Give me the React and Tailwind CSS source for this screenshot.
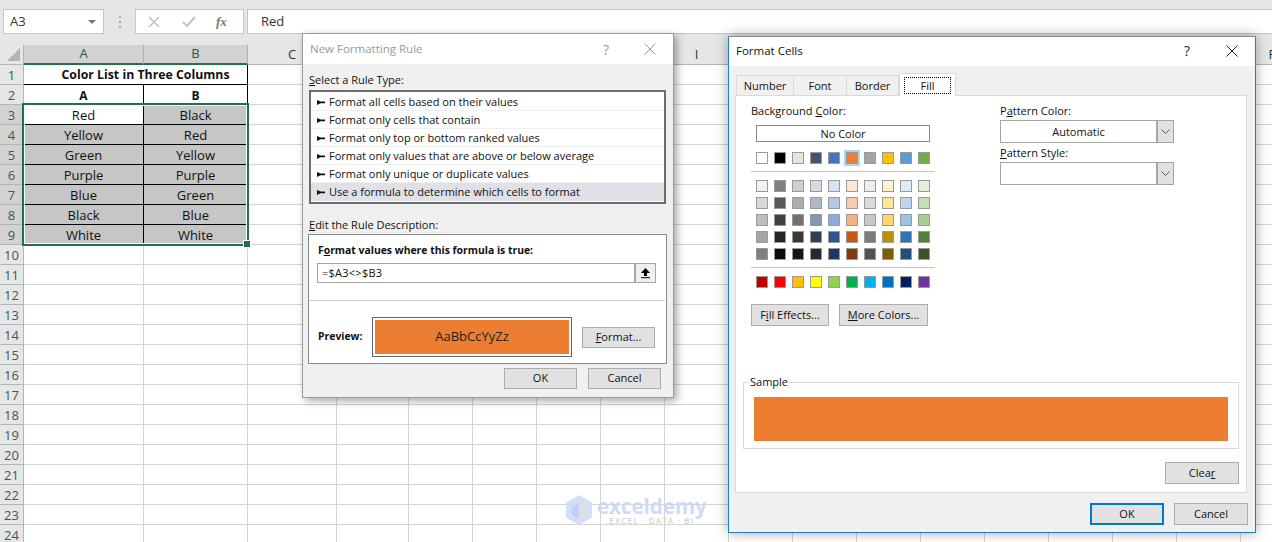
const headerCols = ['A', 'B', 'C', 'D', 'E', 'F', 'G', 'H', 'I', 'J', 'K', 'L', 'M', 'N', 'O', 'P', 'Q', 'R'];
const tableRows = [
  ['Red', 'Black'],
  ['Yellow', 'Red'],
  ['Green', 'Yellow'],
  ['Purple', 'Purple'],
  ['Blue', 'Green'],
  ['Black', 'Blue'],
  ['White', 'White'],
];

const themeColors = ['#ffffff', '#000000', '#e7e6e6', '#44546a', '#4472c4', '#ed7d31', '#a5a5a5', '#ffc000', '#5b9bd5', '#70ad47'];
const tintRows = [
  ['#f2f2f2', '#7f7f7f', '#d0cece', '#d6dce4', '#d9e2f3', '#fbe5d5', '#ededed', '#fff2cc', '#deeaf6', '#e2efd9'],
  ['#d8d8d8', '#595959', '#aeabab', '#adb9ca', '#b4c6e7', '#f7cbac', '#dbdbdb', '#ffe599', '#bdd6ee', '#c5e0b3'],
  ['#bfbfbf', '#3f3f3f', '#757070', '#8496b0', '#8eaadb', '#f4b183', '#c9c9c9', '#ffd966', '#9cc3e5', '#a8d08d'],
  ['#a5a5a5', '#262626', '#3a3838', '#323f4f', '#2f5496', '#c55a11', '#7b7b7b', '#bf9000', '#2e75b5', '#538135'],
  ['#7f7f7f', '#0c0c0c', '#171616', '#222a35', '#1f3864', '#833c0b', '#525252', '#7f6000', '#1e4e79', '#375623'],
];
const standardColors = ['#c00000', '#ff0000', '#ffc000', '#ffff00', '#92d050', '#00b050', '#00b0f0', '#0070c0', '#002060', '#7030a0'];

const ruleTypes = [
  'Format all cells based on their values',
  'Format only cells that contain',
  'Format only top or bottom ranked values',
  'Format only values that are above or below average',
  'Format only unique or duplicate values',
  'Use a formula to determine which cells to format',
];

function CloseIcon({ color }) {
  return (
    <svg width="12" height="12" viewBox="0 0 12 12" fill="none" stroke={color} strokeWidth="1">
      <path d="M0.5 0.5L11.5 11.5M11.5 0.5L0.5 11.5" />
    </svg>
  );
}

function ChevronIcon() {
  return (
    <svg width="9" height="5" viewBox="0 0 9 5" fill="none" stroke="#555" strokeWidth="1">
      <path d="M0.5 0.5L4.5 4.5L8.5 0.5" />
    </svg>
  );
}

function RuleArrow() {
  return (
    <svg width="8" height="5" viewBox="0 0 8 5" className="shrink-0" fill="#111">
      <path d="M0 0L3.5 1.6L8 1.6L8 3.2L3.5 3.2L0 5Z" />
    </svg>
  );
}

function DialogButton({ className = '', children }) {
  return (
    <div className={`flex items-center justify-center h-[22px] bg-[#e1e1e1] border border-[#adadad] text-[#111] ${className}`}>
      {children}
    </div>
  );
}

function Swatch({ color, selected }) {
  return (
    <div
      className={`w-3 h-3 border border-[#9a9a9a] ${selected ? 'ring-2 ring-[#a6d4f5]' : ''}`}
      style={{ backgroundColor: color }}
    />
  );
}

function SwatchRow({ colors, selected }) {
  return (
    <div className="flex gap-[6px]">
      {colors.map((c, i) => (
        <Swatch key={i} color={c} selected={selected === i} />
      ))}
    </div>
  );
}

function Combo({ value }) {
  return (
    <div className="flex w-[174px] h-[23px] mt-px bg-white border border-[#a5a5a5]">
      <div className="flex-1 flex items-center justify-center pt-px">{value}</div>
      <div className="flex items-center justify-center w-[17px] bg-[#e1e1e1] border-l-2 border-[#a5a5a5]">
        <ChevronIcon />
      </div>
    </div>
  );
}

function Toolbar() {
  return (
    <div className="flex items-start h-[45px] pt-[9px] pl-[3px] bg-[#e6e6e6]">
      <div className="flex items-center justify-between w-[101px] h-[25px] pl-[6px] pr-[7px] bg-white border border-[#c6c6c6] text-[13px] text-[#333]">
        <span>A3</span>
        <span className="w-0 h-0 border-x-[4px] border-x-transparent border-t-[4px] border-t-[#777]" />
      </div>
      <div className="flex flex-col gap-[3px] w-[31px] h-[25px] items-center justify-center">
        <span className="w-[2px] h-[2px] bg-[#a8a8a8]" />
        <span className="w-[2px] h-[2px] bg-[#a8a8a8]" />
        <span className="w-[2px] h-[2px] bg-[#a8a8a8]" />
      </div>
      <div className="flex items-center w-[109px] h-[25px] bg-white border border-[#c6c6c6]">
        <svg width="12" height="12" viewBox="0 0 12 12" className="ml-[12px]" fill="none" stroke="#c4c4c4" strokeWidth="1.6">
          <path d="M1 1L11 11M11 1L1 11" />
        </svg>
        <svg width="14" height="12" viewBox="0 0 14 12" className="ml-[22px]" fill="none" stroke="#c4c4c4" strokeWidth="2">
          <path d="M1 6L5 10L13 1" />
        </svg>
        <span className="ml-[20px] font-['Liberation_Serif',serif] italic font-bold text-[13px] text-[#777]">fx</span>
      </div>
      <div className="flex items-center flex-1 h-[25px] ml-[3px] pl-[13px] bg-white border-y border-l border-[#c6c6c6] text-[13px] text-[#333]">
        Red
      </div>
    </div>
  );
}

function Sheet() {
  return (
    <div className="grid grid-cols-[24px_120px_104px_89px_72px_repeat(14,64px)] auto-rows-[20px] w-[1369px] text-[13px] text-[#111]">
      <div className="relative bg-[#e6e6e6] border-r border-b border-[#b4b4b4]">
        <span className="absolute right-[3px] bottom-[3px] w-0 h-0 border-l-[13px] border-l-transparent border-b-[13px] border-b-[#b4b4b4]" />
      </div>
      {headerCols.map((col, i) =>
        i < 2 ? (
          <div key={col} className="flex items-center justify-center bg-[#d2d2d2] border-r border-[#b0b0b0] border-b-2 border-b-[#217346] text-[#1f5c3a]">
            {col}
          </div>
        ) : (
          <div key={col} className="flex items-center justify-center bg-[#e6e6e6] border-r border-b border-[#b4b4b4] text-[#333]">
            {col}
          </div>
        )
      )}

      {Array.from({ length: 24 }, (_, r) => {
        const row = r + 1;
        const data = row >= 3 && row <= 9 ? tableRows[row - 3] : null;
        return (
          <div key={row} className="contents">
            <div className={`flex items-center justify-center pt-[2px] border-r border-b border-[#b4b4b4] text-[#3e5a4a] ${data ? 'bg-[#d2d2d2]' : 'bg-[#e6e6e6]'}`}>
              {row}
            </div>
            {row === 1 && (
              <div className="col-span-2 flex items-center justify-center pl-[20px] pt-[2px] text-[12.3px] font-bold border-r border-b border-black">
                Color List in Three Columns
              </div>
            )}
            {row === 2 && (
              <>
                <div className="flex items-center justify-center pt-[2px] text-[12px] font-bold border-r border-b border-black">A</div>
                <div className="flex items-center justify-center pt-[2px] text-[12px] font-bold border-r border-b border-black">B</div>
              </>
            )}
            {data && (
              <>
                <div className={`flex items-center justify-center pt-[2px] border-r border-b border-black ${row === 3 ? 'bg-white' : 'bg-[#c6c6c6]'}`}>
                  {data[0]}
                </div>
                <div className="flex items-center justify-center pt-[2px] border-r border-b border-black bg-[#c6c6c6]">{data[1]}</div>
              </>
            )}
            {row > 9 && (
              <>
                <div className="border-r border-b border-[#d4d4d4]" />
                <div className="border-r border-b border-[#d4d4d4]" />
              </>
            )}
            {headerCols.slice(2).map((c) => (
              <div key={c} className="border-r border-b border-[#d4d4d4]" />
            ))}
          </div>
        );
      })}
    </div>
  );
}

function NewRuleDialog() {
  return (
    <div className="absolute left-[302px] top-[33px] w-[372px] h-[365px] bg-[#f0f0f0] border border-[#9a9a9a] shadow-[3px_3px_8px_rgba(0,0,0,0.35)]">
      <div className="flex items-center h-[30px] pl-[7px] bg-white text-[#999] text-[11.5px]">
        <span className="flex-1">New Formatting Rule</span>
        <span className="mr-[35px] text-[14px] text-[#999]">?</span>
        <span className="mr-[17px]"><CloseIcon color="#999" /></span>
      </div>
      <div className="px-[6px]">
        <div className="mt-[8px] h-4 leading-4"><u>S</u>elect a Rule Type:</div>
        <div className="mt-[2px] w-[357px] h-[114px] py-px bg-white border-2 border-[#6d6d6d]">
          {ruleTypes.map((rule, i) => (
            <div
              key={rule}
              className={`flex items-center gap-[4px] h-[18px] pl-[6px] pt-px border-b ${i === 5 ? 'bg-[#e0e0e6] border-[#e0e0e6]' : 'border-[#f0f0f0]'}`}
            >
              <RuleArrow />
              <span>{rule}</span>
            </div>
          ))}
        </div>
        <div className="mt-[13px] h-4 leading-4"><u>E</u>dit the Rule Description:</div>
        <div className="mt-px -ml-px w-[359px] h-[130px] bg-white border border-[#8a8a8a]">
          <div className="mt-[7px] ml-[9px] h-4 leading-4 font-bold text-[10.4px]">F<u>o</u>rmat values where this formula is true:</div>
          <div className="flex mt-[5px] ml-[8px] w-[339px] h-[20px] border border-[#a5a5a5]">
            <div className="flex-1 flex items-center pl-[4px] tracking-[0.25px]">=$A3&lt;&gt;$B3</div>
            <div className="flex items-center justify-center w-[21px] bg-[#f0f0f0] border-l-2 border-[#a5a5a5]">
              <svg width="11" height="12" viewBox="0 0 11 12" fill="#000">
                <path d="M5.5 1L10 6H7V9H4V6H1Z" />
                <path d="M1 10.2H10V11.2H1Z" />
              </svg>
            </div>
          </div>
          <div className="mt-[17px] mx-px h-px bg-[#c8c8c8]" />
          <div className="flex items-center mt-[16px] ml-[9px]">
            <div className="w-[54px] font-bold text-[10.4px]">Preview:</div>
            <div className="w-[200px] h-[40px] p-[2px] bg-white border border-[#666]">
              <div className="flex items-center justify-center h-full bg-[#ed7d31] text-[13px] text-[#222]">AaBbCcYyZz</div>
            </div>
            <DialogButton className="ml-[10px] w-[73px] !h-[21px]"><span><u>F</u>ormat...</span></DialogButton>
          </div>
        </div>
      </div>
      <div className="flex justify-end gap-[11px] mt-[4px] pr-[12px]">
        <DialogButton className="w-[73px] !h-[21px]">OK</DialogButton>
        <DialogButton className="w-[73px] !h-[21px]">Cancel</DialogButton>
      </div>
    </div>
  );
}

function FormatCellsDialog() {
  return (
    <div className="absolute left-[728px] top-[36px] w-[528px] h-[497px] bg-[#f0f0f0] border border-[#1a7fd1] border-t-[#8a8a8a] shadow-[0_0_12px_rgba(0,0,0,0.35)]">
      <div className="flex items-center h-[29px] pl-[7px] pb-[2px] bg-white text-[#111] text-[11.5px]">
        <span className="flex-1">Format Cells</span>
        <span className="mr-[36px] text-[14px] text-[#222]">?</span>
        <span className="mr-[17px]"><CloseIcon color="#222" /></span>
      </div>
      <div className="flex items-end h-[29px] pl-[7px]">
        <div className="flex items-center justify-center pt-px w-[57px] h-[20px] border-t border-l border-[#d9d9d9]">Number</div>
        <div className="flex items-center justify-center pt-px w-[53px] h-[20px] border-t border-l border-[#d9d9d9]">Font</div>
        <div className="flex items-center justify-center pt-px w-[53px] h-[20px] border-t border-x border-[#d9d9d9]">Border</div>
        <div className="relative z-10 -mb-px flex items-center justify-center w-[57px] h-[23px] bg-white border-t border-x border-[#d9d9d9]">
          <span className="px-[15px] border border-dotted border-black leading-[15px]">Fill</span>
        </div>
      </div>
      <div className="ml-[6px] w-[512px] h-[398px] bg-white border border-[#d9d9d9]">
        <div className="flex h-[230px] pt-[7px]">
          <div className="w-[249px] ml-[15px]">
            <div className="h-4 leading-4">Background <u>C</u>olor:</div>
            <div className="flex items-center justify-center ml-[5px] mt-[6px] pt-px w-[174px] h-[17px] border border-[#8a8a8a]">No Color</div>
            <div className="ml-[5px] mt-[10px]"><SwatchRow colors={themeColors} selected={5} /></div>
            <div className="mt-[7px] w-[184px] h-px bg-[#c0c0c0]" />
            <div className="flex flex-col gap-[5px] ml-[5px] mt-[8px]">
              {tintRows.map((colors, i) => (
                <SwatchRow key={i} colors={colors} />
              ))}
            </div>
            <div className="mt-[7px] w-[184px] h-px bg-[#c0c0c0]" />
            <div className="ml-[5px] mt-[8px]"><SwatchRow colors={standardColors} /></div>
            <div className="flex gap-[10px] mt-[16px]">
              <DialogButton className="w-[78px]"><span>F<u>i</u>ll Effects...</span></DialogButton>
              <DialogButton className="w-[89px]"><span><u>M</u>ore Colors...</span></DialogButton>
            </div>
          </div>
          <div>
            <div className="h-4 leading-4">P<u>a</u>ttern Color:</div>
            <Combo value="Automatic" />
            <div className="mt-[2px] h-4 leading-4"><u>P</u>attern Style:</div>
            <Combo value="" />
          </div>
        </div>
        <div className="relative mt-[56px] ml-[7px] w-[496px] h-[67px] border border-[#d9d9d9]">
          <span className="absolute left-[5px] -top-[9px] px-px h-4 leading-4 bg-white">Sample</span>
          <div className="mt-[14px] ml-[10px] w-[474px] h-[44px] bg-[#ed7d31]" />
        </div>
        <div className="flex justify-end mt-[13px] mr-[7px]">
          <DialogButton className="w-[74px]"><span>Clea<u>r</u></span></DialogButton>
        </div>
      </div>
      <div className="flex justify-end gap-[10px] mt-[10px] pr-[7px]">
        <DialogButton className="w-[74px] !border-2 !border-[#0078d7]">OK</DialogButton>
        <DialogButton className="w-[74px]">Cancel</DialogButton>
      </div>
    </div>
  );
}

function Watermark() {
  return (
    <div className="absolute left-[565px] top-[495px] flex items-center gap-[4px] opacity-90">
      <svg width="28" height="31" viewBox="0 0 28 31">
        <path d="M14 0L27 7.5V22.5L14 30L1 22.5V7.5Z" fill="#cfdcf7" />
        <path d="M14 8L21 12V20L14 24Z" fill="#dcdcdc" />
        <path d="M14 8L7 12V20L14 24Z" fill="#bccdf2" />
      </svg>
      <div className="flex flex-col items-center">
        <span className="font-bold text-[20.5px] leading-[20px] text-[#c9d7f7]">exceldemy</span>
        <span className="text-[8px] leading-[10px] font-semibold tracking-[1.2px] text-[#d0d0d0]">EXCEL · DATA · BI</span>
      </div>
    </div>
  );
}

export default function App() {
  return (
    <div className="relative w-[1272px] h-[542px] overflow-hidden bg-white font-['Open_Sans',sans-serif] text-[11px] text-[#111]">
      <Toolbar />
      <Sheet />
      {/* selected range A3:B9 */}
      <div className="absolute left-[22px] top-[103px] w-[227px] h-[143px] border-2 border-[#217346]">
        <div className="w-full h-full border border-white" />
        <span className="absolute -right-[3px] -bottom-[3px] w-[6px] h-[6px] bg-[#217346] ring-1 ring-white" />
      </div>
      <Watermark />
      <NewRuleDialog />
      <FormatCellsDialog />
    </div>
  );
}
